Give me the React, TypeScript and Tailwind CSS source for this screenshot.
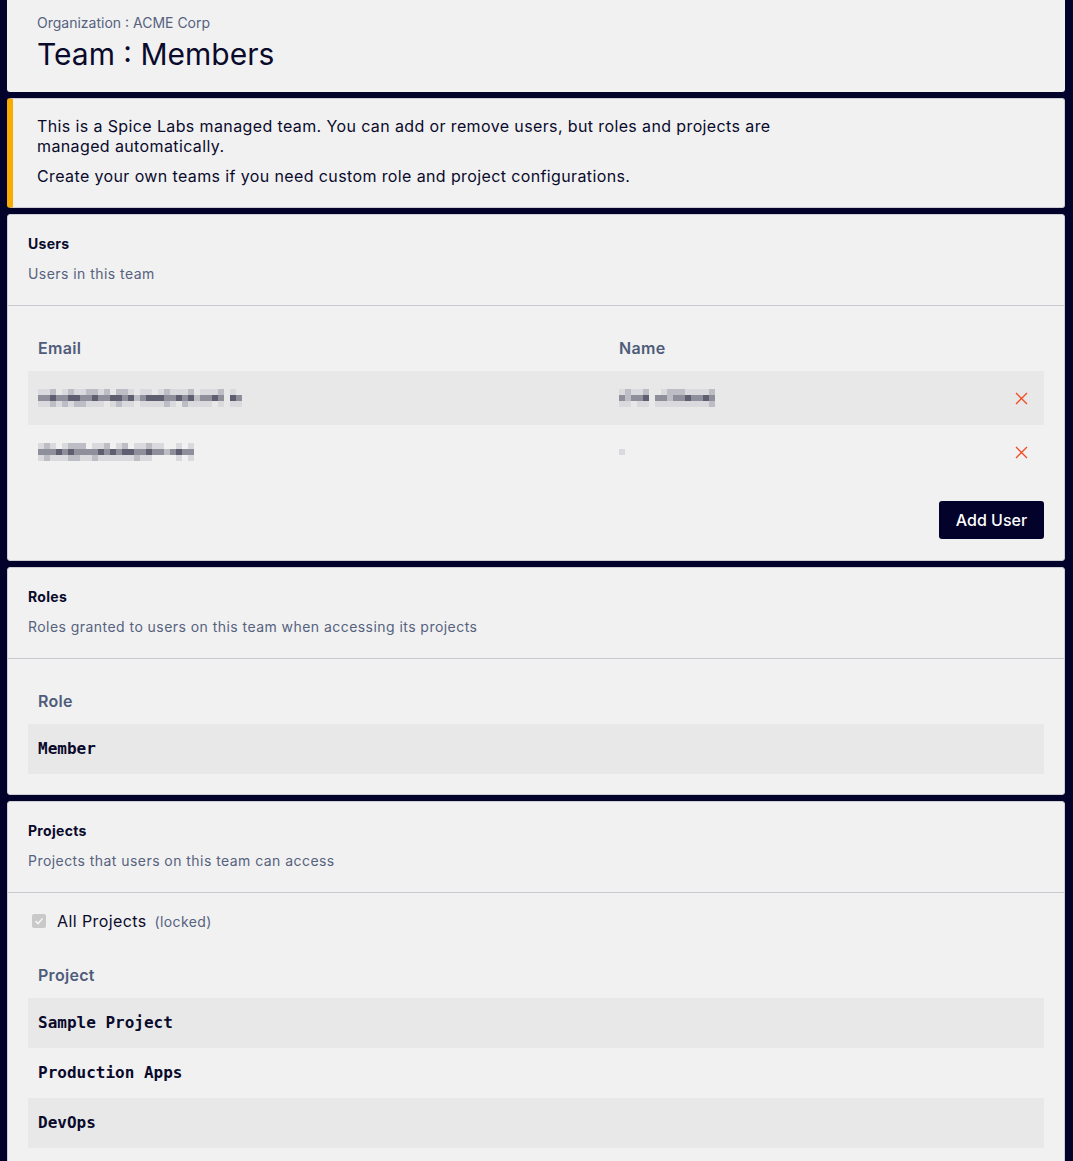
import React from "react";

const EMAIL1 = [
  "1120121122120221011012111201112010",
  "3343344334334434234443343423343043",
  "1121212211101211011112102111101011",
];
const EMAIL2 = [
  "12101222011201201121100101",
  "33343433334343443343323433",
  "12111221121111112110000101",
];
const NAME1 = [
  "1211200122211112",
  "3233403323343343",
  "1101101111111112",
];
const NAME2 = ["0", "1", "0"];

const SHADES: Record<string, string> = {
  "0": "transparent",
  "1": "#d9d9de",
  "2": "#bdbdc6",
  "3": "#8f8f9c",
  "4": "#5e5e70",
};

function Pixelated({ rows }: { rows: string[] }) {
  return (
    <div className="flex flex-col">
      {rows.map((r, i) => (
        <div key={i} className="flex">
          {r.split("").map((c, j) => (
            <div key={j} className="w-[6px] h-[6px]" style={{ background: SHADES[c] }} />
          ))}
        </div>
      ))}
    </div>
  );
}

function XIcon() {
  return (
    <svg width="13" height="13" viewBox="0 0 13 13" fill="none">
      <path d="M1 1L12 12M12 1L1 12" stroke="#f04b22" strokeWidth="1.3" />
    </svg>
  );
}

function CardHeader({ title, desc }: { title: string; desc: string }) {
  return (
    <div className="px-[20px] pt-[19px] pb-[21px] border-b border-[#c9cacf]">
      <div className="text-[14px] leading-[20px] font-bold tracking-[0.3px] text-[#0a0a2c]">{title}</div>
      <div className="mt-[10px] text-[14px] leading-[20px] tracking-[0.45px] text-[#56627e]">{desc}</div>
    </div>
  );
}

const card = "bg-[#f1f1f1] border border-[#cdced3] rounded-[3px]";
const thCls = "h-[46px] flex items-center px-[10px] text-[16px] font-semibold tracking-[0.3px] text-[#4f5c7a]";
const mono = "font-['DejaVu_Sans_Mono',monospace] font-bold text-[16px] text-[#0a0a2c]";

export default function App() {
  return (
    <div className="min-h-[1161px] bg-[#02022a] pl-[7px] pr-[8px] flex flex-col gap-[6px] font-['Inter',sans-serif]">
      <div className="bg-[#f1f1f1] rounded-b-[3px] pl-[30px] pt-[13px] pb-[20px]">
        <div className="text-[14px] leading-[20px] text-[#56627e]">Organization : ACME Corp</div>
        <div className="mt-[3px] text-[30px] leading-[36px] text-[#0a0a2c]">Team : Members</div>
      </div>

      <div className={`${card} border-l-[6px] border-l-[#f9ac00] pl-[24px] pt-[17px] pb-[21px]`}>
        <p className="max-w-[760px] text-[16px] leading-[20px] tracking-[0.38px] text-[#0a0a2c]">
          This is a Spice Labs managed team. You can add or remove users, but roles and projects are managed automatically.
        </p>
        <p className="mt-[10px] text-[16px] leading-[20px] tracking-[0.38px] text-[#0a0a2c]">
          Create your own teams if you need custom role and project configurations.
        </p>
      </div>

      <div className={card}>
        <CardHeader title="Users" desc="Users in this team" />
        <div className="px-[20px] pt-[19px] pb-[21px]">
          <div className="grid grid-cols-[581px_1fr_60px]">
            <div className={thCls}>Email</div>
            <div className={thCls}>Name</div>
            <div className="h-[46px]" />
          </div>
          <div className="grid grid-cols-[581px_1fr_60px] h-[54px] bg-[#e8e8e8] items-center">
            <div className="px-[10px]"><Pixelated rows={EMAIL1} /></div>
            <div className="px-[10px]"><Pixelated rows={NAME1} /></div>
            <div className="flex justify-end pr-[16px]"><XIcon /></div>
          </div>
          <div className="grid grid-cols-[581px_1fr_60px] h-[54px] items-center">
            <div className="px-[10px]"><Pixelated rows={EMAIL2} /></div>
            <div className="px-[10px]"><Pixelated rows={NAME2} /></div>
            <div className="flex justify-end pr-[16px]"><XIcon /></div>
          </div>
          <div className="mt-[22px] flex justify-end">
            <button className="h-[38px] w-[105px] bg-[#02022a] text-white text-[16px] rounded-[3px] font-medium">Add User</button>
          </div>
        </div>
      </div>

      <div className={card}>
        <CardHeader title="Roles" desc="Roles granted to users on this team when accessing its projects" />
        <div className="px-[20px] pt-[19px] pb-[20px]">
          <div className={thCls}>Role</div>
          <div className={`h-[50px] flex items-center px-[10px] bg-[#e8e8e8] ${mono}`}>Member</div>
        </div>
      </div>

      <div className={`${card} flex-1`}>
        <CardHeader title="Projects" desc="Projects that users on this team can access" />
        <div className="px-[20px] pt-[18px] pb-[20px]">
          <div className="flex items-center h-[20px] pl-[4px]">
            <span className="w-[14px] h-[14px] rounded-[2px] bg-[#c9c9c9] flex items-center justify-center">
              <svg width="10" height="10" viewBox="0 0 10 10" fill="none">
                <path d="M1.5 5.2L4 7.5L8.5 2.5" stroke="#f4f4f4" strokeWidth="1.6" />
              </svg>
            </span>
            <span className="ml-[11px] text-[16px] tracking-[0.4px] text-[#0a0a2c]">All Projects</span>
            <span className="ml-[8px] text-[14px] tracking-[0.4px] text-[#56627e]">(locked)</span>
          </div>
          <div className="mt-[21px]">
            <div className={thCls}>Project</div>
            <div className={`h-[50px] flex items-center px-[10px] bg-[#e8e8e8] ${mono}`}>Sample Project</div>
            <div className={`h-[50px] flex items-center px-[10px] ${mono}`}>Production Apps</div>
            <div className={`h-[50px] flex items-center px-[10px] bg-[#e8e8e8] ${mono}`}>DevOps</div>
          </div>
        </div>
      </div>
    </div>
  );
}
